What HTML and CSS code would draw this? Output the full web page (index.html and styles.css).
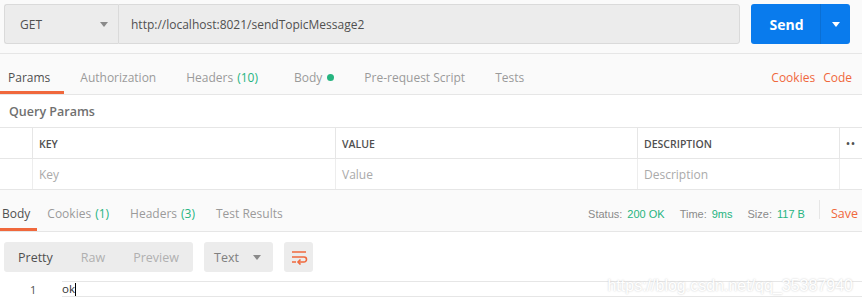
FILE: index.html
```html
<!DOCTYPE html>
<html lang="en">
<head>
  <meta charset="UTF-8" />
  <title>sendTopicMessage2</title>
  <link rel="stylesheet" href="styles.css">
</head>
<body>

<div class="topbar">
  <div class="method">
    <span>GET</span>
    <span class="caret"></span>
  </div>
  <div class="url">http://localhost:8021/sendTopicMessage2</div>
  <div class="send">
    <span class="send-label">Send</span>
    <span class="send-more"><span class="caret white"></span></span>
  </div>
</div>

<div class="tabs">
  <span class="tab active">Params</span>
  <span class="tab">Authorization</span>
  <span class="tab">Headers <em>(10)</em></span>
  <span class="tab body-tab">Body <i class="dot"></i></span>
  <span class="tab">Pre-request Script</span>
  <span class="tab">Tests</span>
  <span class="spacer"></span>
  <span class="link">Cookies</span>
  <span class="link">Code</span>
</div>

<div class="query">
  <div class="query-title">Query Params</div>
  <div class="grid head">
    <div class="cell check"></div>
    <div class="cell">KEY</div>
    <div class="cell">VALUE</div>
    <div class="cell">DESCRIPTION</div>
    <div class="cell more">••</div>
  </div>
  <div class="grid row">
    <div class="cell check"></div>
    <div class="cell ph">Key</div>
    <div class="cell ph">Value</div>
    <div class="cell ph">Description</div>
    <div class="cell more"></div>
  </div>
</div>

<div class="tabs resp">
  <span class="tab active">Body</span>
  <span class="tab">Cookies <em>(1)</em></span>
  <span class="tab">Headers <em>(3)</em></span>
  <span class="tab">Test Results</span>
  <span class="spacer"></span>
  <span class="meta">Status: <em>200 OK</em></span>
  <span class="meta">Time: <em>9ms</em></span>
  <span class="meta last">Size: <em>117 B</em></span>
  <span class="sep"></span>
  <span class="link save">Save</span>
</div>

<div class="viewer">
  <div class="toolbar">
    <div class="modes">
      <span class="mode on">Pretty</span>
      <span class="mode">Raw</span>
      <span class="mode">Preview</span>
    </div>
    <div class="format">Text <span class="caret"></span></div>
    <div class="wrap">
      <svg width="18" height="16" viewBox="0 0 18 16">
        <path d="M2 3h14M2 8h12a2.5 2.5 0 0 1 0 5H9M2 13h4" fill="none" stroke="#f0683c" stroke-width="1.6"/>
        <path d="M10.5 10.5L8 13l2.5 2.5" fill="none" stroke="#f0683c" stroke-width="1.6"/>
      </svg>
    </div>
  </div>
  <div class="code">
    <span class="ln">1</span>
    <span class="line">ok<span class="cursor"></span></span>
  </div>
  <div class="mark">https://blog.csdn.net/qq_35387940</div>
</div>

</body>
</html>
```

FILE: styles.css
```css
body { margin: 0; font-family: "Open Sans", Arial, sans-serif; font-size: 12px; color: #505050; background: #fafafa; width: 862px; height: 307px; overflow: hidden; }

.topbar { display: flex; padding: 4px 12px 9px 4px; border-bottom: 1px solid #e6e6e6; }
.method { width: 114px; height: 40px; box-sizing: border-box; background: #ececec; border: 1px solid #dadada; border-right: none; border-radius: 3px 0 0 3px; display: flex; align-items: center; justify-content: space-between; padding: 0 10px 0 15px; font-size: 12px; color: #505050; }
.url { flex: 1; height: 40px; box-sizing: border-box; background: #ececec; border: 1px solid #dadada; border-radius: 0 3px 3px 0; display: flex; align-items: center; padding-left: 12px; font-size: 12px; color: #505050; }
.send { margin-left: 11px; width: 99px; height: 40px; background: #097bed; border-radius: 3px; display: flex; color: #fff; }
.send-label { flex: 1; display: flex; align-items: center; justify-content: center; font-weight: bold; font-size: 14px; padding-left: 2px; }
.send-more { width: 29px; border-left: 1px solid #0a6fd4; display: flex; align-items: center; justify-content: center; }

.caret { display: inline-block; width: 0; height: 0; border-left: 4px solid transparent; border-right: 4px solid transparent; border-top: 5px solid #8a8a8a; }
.caret.white { border-top-color: #fff; }

.tabs { display: flex; align-items: stretch; height: 40px; border-bottom: 1px solid #e6e6e6; }
.tab { display: flex; align-items: center; padding: 10px 14px 0 8px; margin-right: 8px; color: #9a9a9a; font-size: 12px; border-bottom: 3px solid transparent; box-sizing: border-box; }
.tab.active { color: #505050; border-bottom-color: #f0683c; }
.body-tab { margin-left: 6px; }
.tab em, .meta em { font-style: normal; color: #26b47f; margin-left: 4px; }
.dot { display: inline-block; width: 7px; height: 7px; border-radius: 50%; background: #26b47f; margin-left: 5px; }
.spacer { flex: 1; }
.link { display: flex; align-items: center; color: #f0683c; font-size: 12px; margin-left: 8px; padding-top: 7px; }
.tabs > .link:last-child { margin-right: 10px; }

.query { background: #fff; }
.query-title { height: 33px; display: flex; align-items: center; padding-left: 9px; font-weight: 600; color: #707070; font-size: 12.5px; border-bottom: 1px solid #e6e6e6; box-sizing: border-box; }
.grid { display: grid; grid-template-columns: 33px 303px 302px 202px 1fr; height: 30px; border-bottom: 1px solid #e6e6e6; }
.cell { display: flex; align-items: center; padding-left: 6px; border-right: 1px solid #e6e6e6; }
.cell.check { padding: 0; }
.cell.more { border-right: none; color: #a0a0a0; font-size: 9px; letter-spacing: 1px; }
.head .cell { font-weight: 600; font-size: 10.5px; color: #505050; padding-top: 2px; }
.row .cell { border-right-color: #ededed; }
.ph { color: #aaa; }

.resp { height: 41px; background: #fafafa; }
.resp .tab { padding: 8px 7px 0 2px; margin-right: 12px; }
.resp .tab.active { margin-right: 8px; }
.meta { display: flex; align-items: center; color: #8a8a8a; font-family: Arial, "Liberation Sans", sans-serif; font-size: 11px; margin-right: 15px; padding-top: 6px; }
.meta em { margin-left: 5px; }
.meta.last { margin-right: 14px; }
.sep { width: 1px; background: #e6e6e6; margin: 10px 0 12px; }
.resp > .save:last-child { margin-left: 11px; margin-right: 4px; font-size: 12.5px; padding-top: 6px; }

.viewer { background: #fff; height: 80px; position: relative; }
.toolbar { display: flex; gap: 11px; padding: 10px 4px 0; height: 30px; }
.modes { display: flex; background: #ececec; border-radius: 3px; width: 189px; }
.mode { display: flex; align-items: center; padding: 0 14px; color: #b0b0b0; font-size: 12.5px; }
.mode.on { color: #505050; }
.format { width: 69px; background: #ececec; border-radius: 3px; display: flex; align-items: center; justify-content: space-between; padding: 0 12px 0 10px; box-sizing: border-box; color: #808080; font-size: 12.5px; }
.wrap { width: 29px; background: #ececec; border-radius: 3px; display: flex; align-items: center; justify-content: center; }

.code { display: flex; align-items: center; margin-top: 10px; height: 14px; }
.ln { width: 62px; padding-left: 30px; box-sizing: border-box; color: #505050; font-size: 11px; }
.line { flex: 1; height: 14px; border-top: 1px solid #e6e6e6; border-bottom: 1px solid #e6e6e6; font-size: 11.5px; line-height: 14px; color: #333; display: flex; align-items: center; }
.cursor { display: inline-block; width: 1px; height: 13px; background: #000; }

.mark { position: absolute; right: 9px; top: 45px; color: #fff; font-family: Arial, "Liberation Sans", sans-serif; font-size: 16px; text-shadow: 0 0 2px #c4c4c4; }
```
